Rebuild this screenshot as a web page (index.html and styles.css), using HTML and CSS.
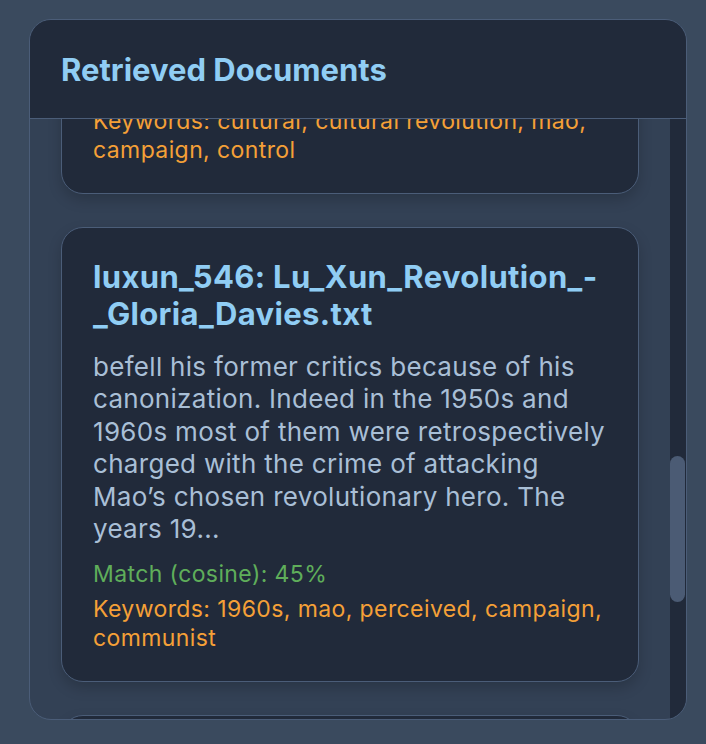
FILE: index.html
```html
<!DOCTYPE html>
<html lang="en">
<head>
<meta charset="utf-8">
<title>Retrieved Documents</title>
<link rel="stylesheet" href="styles.css">
</head>
<body>
<section class="panel">
  <header class="panel-header">
    <h2 class="panel-title">Retrieved Documents</h2>
  </header>
  <div class="panel-body">
    <div class="doc-list">
      <article class="doc-card doc-card--clipped">
        <p class="doc-keywords">Keywords: cultural, cultural revolution, mao, campaign, control</p>
      </article>
      <article class="doc-card">
        <h3 class="doc-title">luxun_546: Lu_Xun_Revolution_-_Gloria_Davies.txt</h3>
        <p class="doc-excerpt">befell his former critics because of his canonization. Indeed in the 1950s and 1960s most of them were retrospectively charged with the crime of attacking Mao’s chosen revolutionary hero. The years 19...</p>
        <p class="doc-match">Match (cosine): 45%</p>
        <p class="doc-keywords">Keywords: 1960s, mao, perceived, campaign, communist</p>
      </article>
      <article class="doc-card doc-card--next"></article>
    </div>
    <div class="scroll-track">
      <div class="scroll-thumb"></div>
    </div>
  </div>
</section>
</body>
</html>
```

FILE: styles.css
```css
* { box-sizing: border-box; }

html, body {
  margin: 0;
  height: 100%;
}

body {
  background: #3a4a5e;
  font-family: Inter, "Noto Sans", "DejaVu Sans", sans-serif;
  padding: 19px 19px 0 29px;
  overflow: hidden;
}

.panel {
  width: 658px;
  height: 701px;
  border: 1px solid #4b5d78;
  border-radius: 22px;
  background: #334155;
  overflow: hidden;
  display: flex;
  flex-direction: column;
}

.panel-header {
  height: 99px;
  flex: none;
  background: #212a3a;
  border-bottom: 1px solid #4b5d78;
  display: flex;
  align-items: center;
  padding: 0 31px;
}

.panel-title {
  margin: 0;
  font-size: 31px;
  font-weight: 700;
  color: #90cdf4;
}

.panel-body {
  flex: 1;
  display: flex;
  min-height: 0;
}

.doc-list {
  flex: 1;
  overflow: hidden;
  padding: 0 31px;
  display: flex;
  flex-direction: column;
  gap: 33px;
}

.doc-card {
  flex: none;
  background: #212a3a;
  border: 1px solid #4b5d78;
  border-radius: 22px;
  padding: 30px 31px 28px 31px;
  box-shadow: 0 6px 14px rgba(0, 0, 0, 0.18);
}

.doc-card--clipped {
  margin-top: -43px;
}

.doc-card--next {
  height: 80px;
}

.doc-title {
  margin: 0 0 19px;
  font-size: 31px;
  line-height: 37px;
  font-weight: 700;
  color: #90cdf4;
  letter-spacing: 0.35px;
}

.doc-excerpt {
  margin: 0 0 15px;
  font-size: 26px;
  line-height: 32.4px;
  color: #a9bfd6;
  letter-spacing: 0.3px;
}

.doc-match {
  margin: 0 0 6px;
  font-size: 23px;
  line-height: 29px;
  color: #5fae5a;
  letter-spacing: 0.4px;
}

.doc-keywords {
  margin: 0;
  font-size: 23px;
  line-height: 29px;
  color: #f5a037;
  letter-spacing: 0.4px;
}

.scroll-track {
  width: 16px;
  flex: none;
  background: #212a3a;
  padding-top: 337px;
}

.scroll-thumb {
  width: 15px;
  height: 146px;
  border-radius: 8px;
  background: #4b5b74;
}
```
